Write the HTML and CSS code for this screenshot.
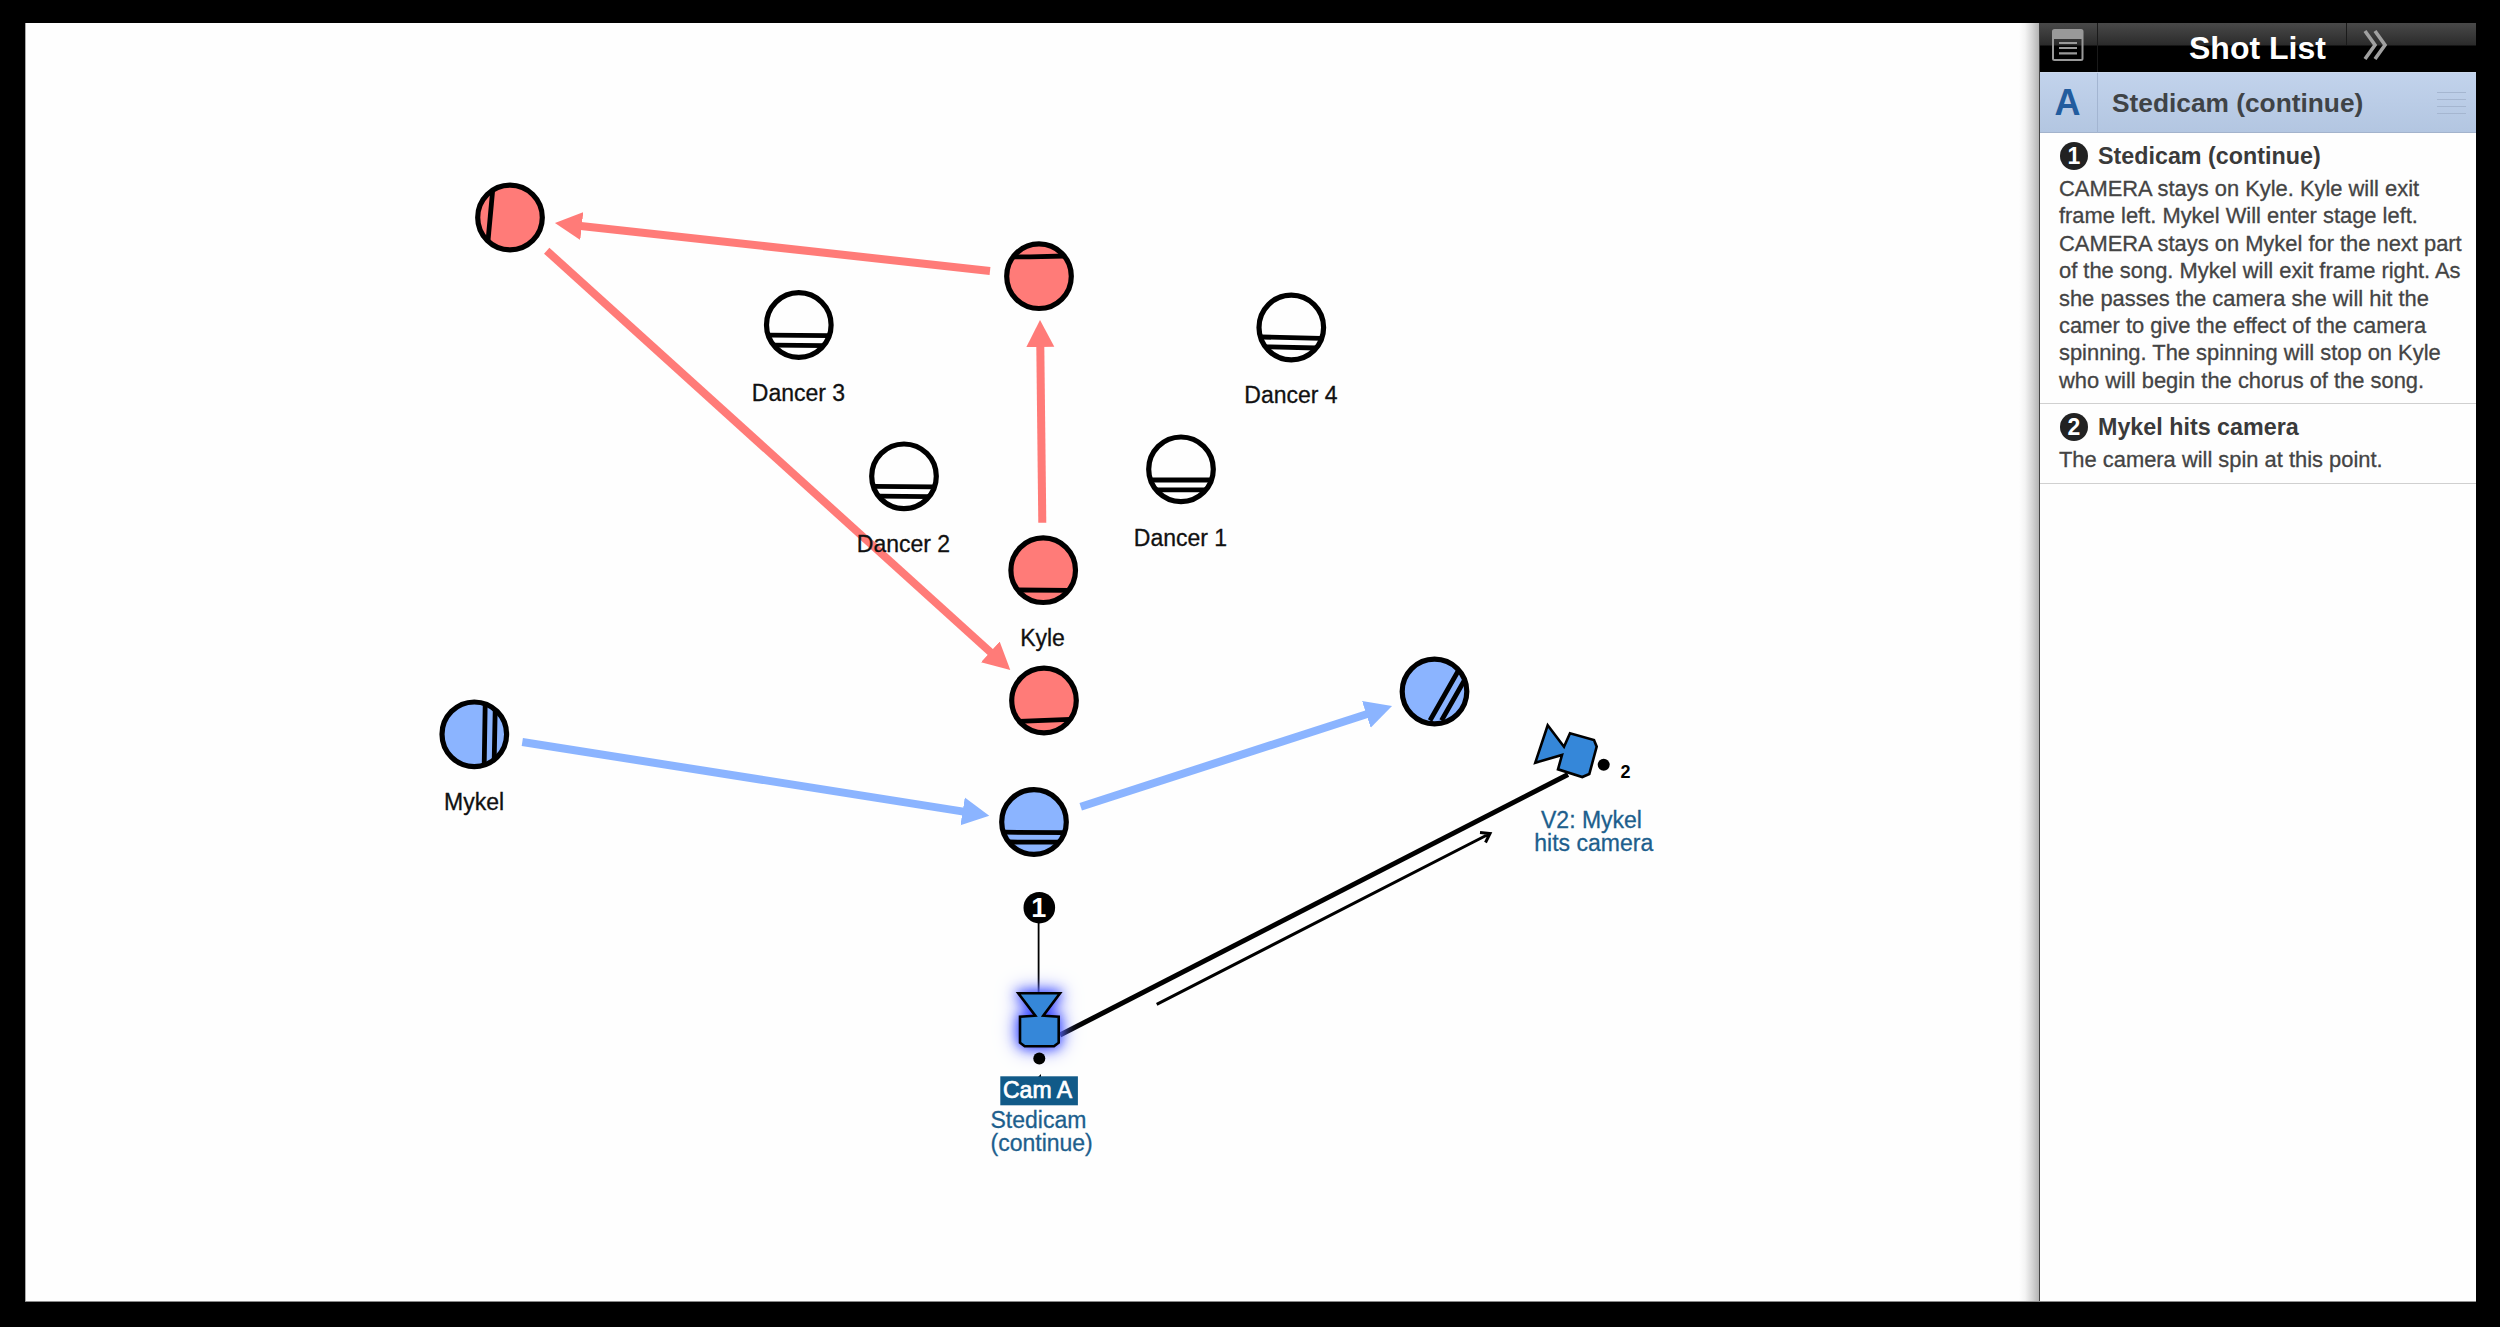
FILE: index.html
```
<!doctype html>
<html>
<head>
<meta charset="utf-8">
<title>Shot List</title>
	<link rel="stylesheet" href="styles.css">
</head>

<body>
	<div id="box">
		<div id="stage">
			<svg class="diagram" viewBox="25 23 2014 1278">
				<defs>
					<marker id="redhead" markerUnits="userSpaceOnUse" markerWidth="28" markerHeight="30" refX="1" refY="15" orient="auto">
						<path d="M0 1 L27 15 L0 29 Z" fill="#ff7b78"/>
					</marker>
					<marker id="bluehead" markerUnits="userSpaceOnUse" markerWidth="28" markerHeight="30" refX="1" refY="15" orient="auto">
						<path d="M0 1 L27 15 L0 29 Z" fill="#8bb4ff"/>
					</marker>
				</defs>

				<!-- moves -->
				<line class="move red" x1="990" y1="271" x2="580.8" y2="225.9"/>
				<line class="move red" x1="546.7" y1="250.7" x2="991" y2="652.6"/>
				<line class="move red" x1="1042.3" y1="522.7" x2="1040.3" y2="346"/>
				<line class="move blue" x1="522.3" y1="742" x2="963.6" y2="811.6"/>
				<line class="move blue" x1="1080.7" y1="806.7" x2="1367.3" y2="714"/>

				<!-- Kyle -->
				<g class="actor kyle">
					<circle cx="510" cy="217.5" r="32.3"/>
					<path d="M492.7 190 L488 240.7"/>
					<circle cx="1039" cy="276.2" r="32.3"/>
					<path d="M1013 256.9 H1030 L1065 256"/>
					<circle cx="1043.2" cy="570.2" r="32.3"/>
					<path d="M1018 590 L1069 590.4"/>
					<circle cx="1044" cy="700.5" r="32.3"/>
					<path d="M1019 721.4 L1070 719.4"/>
				</g>

				<!-- dancers -->
				<g class="actor dancer">
					<circle cx="798.8" cy="325" r="32.3"/>
					<path d="M769 335.2 L829 335.6 M774 345.2 L824 345.6"/>
					<circle cx="904" cy="476.3" r="32.3"/>
					<path d="M874 486.4 L934 486.8 M879 496.2 L929 496.6"/>
					<circle cx="1181" cy="469.3" r="32.3"/>
					<path d="M1151 480 H1211 M1156 489.8 H1206"/>
					<circle cx="1291.3" cy="327.5" r="32.3"/>
					<path d="M1261 337 L1321 338.4 M1266 346.8 L1316 348"/>
				</g>

				<!-- Mykel -->
				<g class="actor mykel">
					<circle cx="474.3" cy="734.3" r="32.3"/>
					<path d="M485.2 704 L484.2 765 M495.2 710 L494.2 760"/>
					<circle cx="1034" cy="822" r="32.3"/>
					<path d="M1004 832.2 L1064 832.6 M1009 842 L1059 842.2"/>
					<circle cx="1434.5" cy="691.5" r="32.3"/>
					<path d="M1458.3 670.7 L1430 720.5 M1464 681 L1441.5 720.5"/>
				</g>

				<g class="label">
					<text x="798.5" y="401">Dancer 3</text>
					<text x="1291" y="403">Dancer 4</text>
					<text x="903.5" y="552">Dancer 2</text>
					<text x="1180.5" y="545.5">Dancer 1</text>
					<text x="1042.5" y="646">Kyle</text>
					<text x="474" y="810">Mykel</text>
				</g>

				<!-- camera track -->
				<line x1="1060" y1="1035" x2="1568" y2="774.5" stroke="#000" stroke-width="5"/>
				<path d="M1156.7 1004.3 L1489 834 M1480 832.5 L1490 833.5 L1485.5 842.5" fill="none" stroke="#000" stroke-width="3"/>
				<line x1="1038.6" y1="920" x2="1038.6" y2="994" stroke="#000" stroke-width="1.8"/>

				<path class="cam glow" d="M1018.3 993.3 H1060 L1043.3 1015.7 L1058.7 1016.7 V1042.7 L1054 1046.2 H1024.7 L1020 1042.7 V1016.7 L1035.3 1015.7 Z"/>
				<path class="cam" d="M1547.7 725.3 L1564 746.7 L1570 733.3 L1594 740 L1596.7 746.7 L1589.3 774 L1582.3 777 L1558 769.3 L1562 755 L1535.3 762.7 Z"/>
				<circle cx="1039.3" cy="1058.4" r="6"/>
				<circle cx="1603.7" cy="764.7" r="6"/>
				<circle cx="1039.3" cy="907.7" r="15.8"/>
				<text class="num" x="1038.8" y="917.3">1</text>
				<text class="vnum" x="1625.4" y="777.7">2</text>

				<path d="M1038 1077 L1041 1074 V1077 Z"/>
				<rect x="1000.3" y="1076.3" width="77.6" height="29" fill="#115a88"/>
				<text class="camname" x="1003" y="1098">Cam A</text>
				<text class="camtext" x="990.5" y="1127.5">Stedicam</text>
				<text class="camtext" x="990.5" y="1151">(continue)</text>
				<text class="camtext" x="1541" y="828">V2: Mykel</text>
				<text class="camtext" x="1534.3" y="851">hits camera</text>
			</svg>
		</div>
		<div id="side">
			<div id="head">
				<div class="menu">
					<svg width="32" height="32" viewBox="0 0 32 32">
						<rect x="1" y="1" width="29.5" height="30" rx="1.5" fill="none" stroke="#999" stroke-width="2"/>
						<rect x="1" y="1" width="29.5" height="9" fill="#999"/>
						<path d="M7 14 H25 M7 19 H25 M7 24.3 H25" stroke="#999" stroke-width="2.2"/>
					</svg>
				</div>
				<div class="title">Shot List</div>
				<div class="next">
					<svg width="26" height="32" viewBox="0 0 26 32">
						<path d="M2 2 L12 16 L2 30 M12 2 L22 16 L12 30" fill="none" stroke="#a0a0a0" stroke-width="3.6"/>
					</svg>
				</div>
			</div>
			<div id="setup">
				<div class="letter">A</div>
				<div class="name">Stedicam (continue)</div>
				<div class="grip"><i></i><i></i><i></i><i></i></div>
			</div>
			<div class="shot">
				<div class="shottitle"><span class="badge">1</span>Stedicam (continue)</div>
				<div class="desc">
					CAMERA stays on Kyle. Kyle will exit<br>
					frame left. Mykel Will enter stage left.<br>
					CAMERA stays on Mykel for the next part<br>
					of the song. Mykel will exit frame right. As<br>
					she passes the camera she will hit the<br>
					camer to give the effect of the camera<br>
					spinning. The spinning will stop on Kyle<br>
					who will begin the chorus of the song.
				</div>
			</div>
			<div class="shot">
				<div class="shottitle"><span class="badge">2</span>Mykel hits camera</div>
				<div class="desc">The camera will spin at this point.</div>
			</div>
		</div>
	</div>
</body>
</html>
```
FILE: styles.css
```
*{
	margin: 0;
	padding: 0;
	box-sizing: border-box;
}
body{
	height: 1327px;
	padding: 23px 24px 25px 25px;
	background-color: #000;
	font-family: "Liberation Sans", Arial, sans-serif;
	overflow: hidden;
}
#box{
	display: flex;
	height: 1279px;
	background-color: #fff;
	border-bottom: 1px solid #8a8a8a;
}
#stage{
	width: 2014px;
	background: linear-gradient(to left, #b4b4b4 0, #d6d6d6 7px, #f4f4f4 14px, #fefefe 20px);
	border-left: 1px solid #aaa;
}
.diagram{
	display: block;
	width: 2014px;
	height: 1278px;
	margin-left: -1px;
}
.move{
	stroke-width: 8;
}
.red{
	stroke: #ff7b78;
	marker-end: url(#redhead);
}
.blue{
	stroke: #8bb4ff;
	marker-end: url(#bluehead);
}
.actor{
	stroke: #000;
	stroke-width: 5.2;
}
.actor path{
	stroke-width: 4.8;
}
.kyle{
	fill: #ff7b78;
}
.mykel{
	fill: #8bb4ff;
}
.dancer{
	fill: #fefefe;
}
.label text{
	font-size: 23px;
	text-anchor: middle;
	fill: #111;
	stroke: #111;
	stroke-width: 0.3;
}
.cam{
	fill: #3587d9;
	stroke: #000;
	stroke-width: 2.6;
}
.glow{
	filter: drop-shadow(0 0 6px #3a4cff) drop-shadow(0 0 9px #7780ff);
}
.num{
	font-size: 27px;
	font-weight: bold;
	text-anchor: middle;
	fill: #fff;
}
.vnum{
	font-size: 18px;
	font-weight: bold;
	text-anchor: middle;
}
.camname{
	font-size: 23px;
	fill: #fff;
	stroke: #fff;
	stroke-width: 0.7;
}
.camtext{
	font-size: 23px;
	fill: #1d5f8d;
	stroke: #1d5f8d;
	stroke-width: 0.3;
}
#side{
	width: 437px;
	border-left: 1px solid #444;
	background-color: #fefefe;
}
#head{
	display: flex;
	height: 49px;
	background: linear-gradient(#494949 0, #2b2b2b 22px, #000 23px);
}
#head .menu{
	width: 58px;
	padding: 6px 0 0 12px;
	border-right: 1px solid #1a1a1a;
}
#head .title{
	width: 249px;
	height: 22px;
	padding-left: 91px;
	border-right: 1px solid #1a1a1a;
	color: #fff;
	font-size: 32px;
	font-weight: bold;
	line-height: 50px;
	white-space: nowrap;
}
#head .next{
	padding: 6px 0 0 16px;
}
#setup{
	display: flex;
	align-items: center;
	height: 61px;
	background: linear-gradient(#c2d3ec, #b3c6e1);
	border-top: 1px solid #cbd8ec;
	border-bottom: 1px solid #a3b3cc;
}
#setup .letter{
	width: 58px;
	height: 60px;
	padding-right: 2px;
	border-right: 1px solid #a3b5d1;
	color: #225c9e;
	font-size: 36px;
	font-weight: bold;
	line-height: 60px;
	text-align: center;
}
#setup .name{
	flex: 1;
	padding: 2px 0 0 14px;
	color: #3f4346;
	font-size: 26.3px;
	font-weight: bold;
}
#setup .grip{
	width: 29px;
	margin-right: 10px;
}
.grip i{
	display: block;
	height: 1px;
	margin: 6px 0;
	background-color: #a5b6d0;
}
.shot{
	padding: 9px 0 9px 20px;
	border-bottom: 1px solid #d0d0d0;
}
.shottitle{
	display: flex;
	align-items: center;
	height: 28px;
	margin-bottom: 5px;
	color: #3a3a3a;
	font-size: 23.3px;
	font-weight: bold;
}
.badge{
	width: 28px;
	height: 28px;
	margin-right: 10px;
	border-radius: 50%;
	background-color: #222;
	color: #fff;
	font-size: 23px;
	line-height: 28px;
	text-align: center;
}
.desc{
	margin-left: -1px;
	color: #444;
	font-size: 21.9px;
	line-height: 27.4px;
	white-space: nowrap;
	-webkit-text-stroke: 0.3px #444;
}
```
